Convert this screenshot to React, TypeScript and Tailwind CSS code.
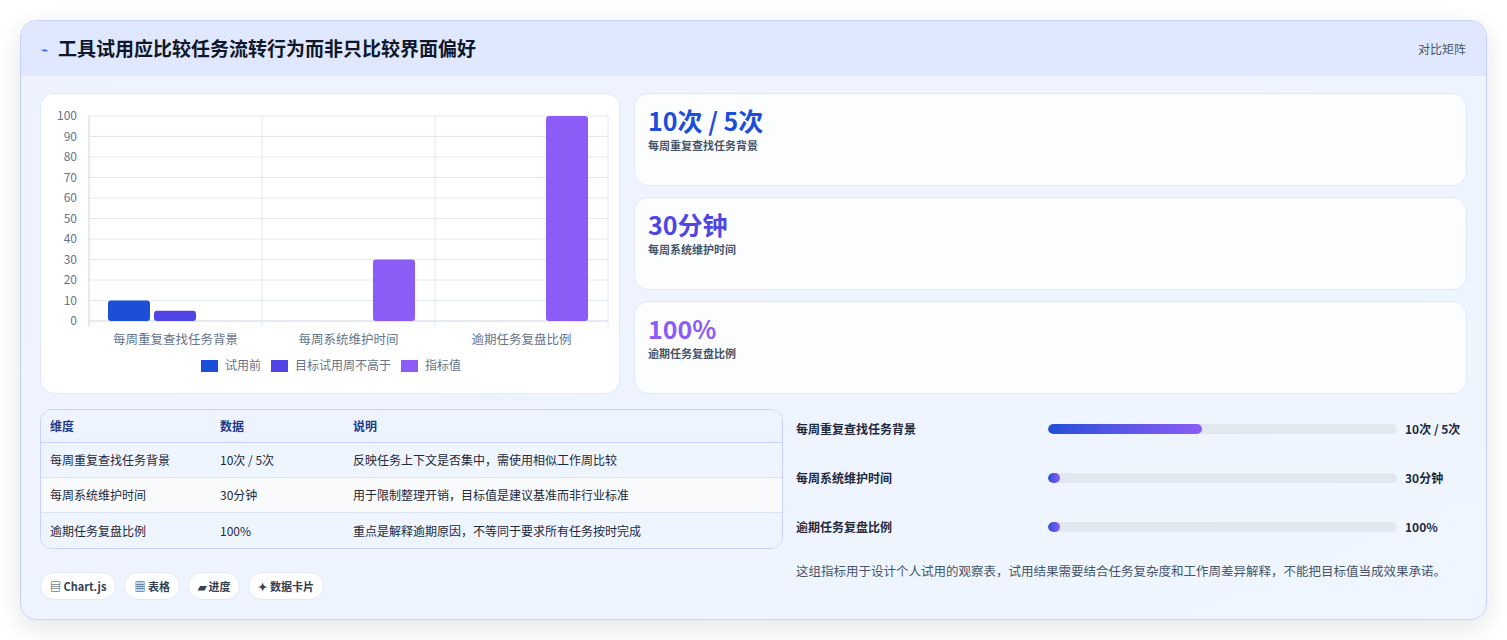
import React from "react";

const F = { fontFamily: '"Noto Sans CJK SC","Noto Sans",sans-serif' };

function Chart() {
  const L = 88, R = 607, T = 115, B = 320;
  const y = (v: number) => B - ((B - T) * v) / 100;
  const ticks = [0, 10, 20, 30, 40, 50, 60, 70, 80, 90, 100];
  const cw = (R - L) / 3;
  const bars = [
    { c: 0, i: 0, v: 10, col: "#1d4ed8" },
    { c: 0, i: 1, v: 5, col: "#4f46e5" },
    { c: 1, i: 2, v: 30, col: "#8b5cf6" },
    { c: 2, i: 2, v: 100, col: "#8b5cf6" },
  ];
  const cats = ["每周重复查找任务背景", "每周系统维护时间", "逾期任务复盘比例"];
  return (
    <svg width="580" height="301" viewBox="40 93 580 301" style={F}>
      {ticks.map((t) => (
        <g key={t}>
          <line x1={L} x2={R} y1={y(t)} y2={y(t)} stroke={t === 0 ? "#cbd5e1" : "#e2e8f0"} />
          <text x={76} y={y(t) + 4} textAnchor="end" fontSize="12" fill="#64748b">{t}</text>
        </g>
      ))}
      {[0, 1, 2, 3].map((k) => (
        <line key={k} x1={L + cw * k} x2={L + cw * k} y1={T} y2={B + 6} stroke={k === 0 ? "#cbd5e1" : "#e2e8f0"} />
      ))}
      {bars.map((b, k) => (
        <rect key={k} x={L + cw * b.c + 19 + b.i * 46} y={y(b.v)} width={42} height={B - y(b.v)} rx={3} fill={b.col} />
      ))}
      {cats.map((c, k) => (
        <text key={c} x={L + cw * k + cw / 2} y={343} textAnchor="middle" fontSize="12.5" fill="#64748b">{c}</text>
      ))}
      {[
        { x: 200, col: "#1d4ed8", t: "试用前" },
        { x: 270, col: "#4f46e5", t: "目标试用周不高于" },
        { x: 400, col: "#8b5cf6", t: "指标值" },
      ].map((l) => (
        <g key={l.t}>
          <rect x={l.x} y={359} width={17} height={12} fill={l.col} />
          <text x={l.x + 24} y={369} fontSize="12" fill="#64748b">{l.t}</text>
        </g>
      ))}
    </svg>
  );
}

const stats = [
  { v: "10次 / 5次", l: "每周重复查找任务背景", c: "text-[#1d4ed8]" },
  { v: "30分钟", l: "每周系统维护时间", c: "text-[#4f46e5]" },
  { v: "100%", l: "逾期任务复盘比例", c: "text-[#8b5cf6]" },
];

const rows = [
  ["每周重复查找任务背景", "10次 / 5次", "反映任务上下文是否集中，需使用相似工作周比较"],
  ["每周系统维护时间", "30分钟", "用于限制整理开销，目标值是建议基准而非行业标准"],
  ["逾期任务复盘比例", "100%", "重点是解释逾期原因，不等同于要求所有任务按时完成"],
];

const prog = [
  { l: "每周重复查找任务背景", v: "10次 / 5次", w: "w-[44%]" },
  { l: "每周系统维护时间", v: "30分钟", w: "w-[12px]" },
  { l: "逾期任务复盘比例", v: "100%", w: "w-[12px]" },
];

export default function App() {
  return (
    <div className="w-[1507px] h-[640px] bg-white pt-[20px] pl-[20px]" style={F}>
      <div className="w-[1467px] h-[600px] rounded-[16px] border border-[#c7d2fe] bg-gradient-to-br from-[#eef2ff] to-[#eff6ff] shadow-[0_8px_24px_rgba(30,41,59,0.12)] overflow-hidden">
        <div className="h-[55px] bg-[#dfe8fe] flex items-center justify-between pl-[20px] pr-[20px]">
          <div className="flex items-center gap-[10px]">
            <span className="text-[#2563eb] text-[12px]">⌁</span>
            <span className="text-[19px] font-bold text-[#0f172a]">工具试用应比较任务流转行为而非只比较界面偏好</span>
          </div>
          <span className="text-[12px] text-[#475569]">对比矩阵</span>
        </div>
        <div className="px-[19px] pt-[17px]">
          <div className="flex gap-[14px]">
            <div className="w-[580px] h-[301px] bg-white rounded-[14px] border border-[#e0e7ff] overflow-hidden">
              <Chart />
            </div>
            <div className="flex-1 flex flex-col gap-[11px]">
              {stats.map((s) => (
                <div key={s.l} className="h-[93px] bg-white/80 rounded-[14px] border border-[#e0e7ff] px-[13px] pt-[10px]">
                  <div className={`text-[25px] font-bold leading-[32px] ${s.c}`}>{s.v}</div>
                  <div className="text-[11px] font-semibold text-[#475569] mt-[1px]">{s.l}</div>
                </div>
              ))}
            </div>
          </div>
          <div className="flex gap-[13px] mt-[15px]">
            <div className="w-[743px]">
              <div className="rounded-[12px] border border-[#c7d2fe] overflow-hidden text-[12px]">
                <div className="flex h-[33px] items-center bg-[#eef4ff] border-b border-[#c7d2fe] font-semibold text-[#1e3a8a]">
                  <div className="w-[179px] pl-[9px]">维度</div>
                  <div className="w-[133px]">数据</div>
                  <div>说明</div>
                </div>
                {rows.map((r, i) => (
                  <div key={i} className={`flex h-[35px] items-center text-[#1e293b] ${i === 1 ? "bg-[#f8fafc]" : "bg-[#eff5ff]"} ${i < 2 ? "border-b border-[#dbe3f4]" : ""}`}>
                    <div className="w-[179px] pl-[9px]">{r[0]}</div>
                    <div className="w-[133px]">{r[1]}</div>
                    <div>{r[2]}</div>
                  </div>
                ))}
              </div>
              <div className="flex gap-[8px] mt-[23px] text-[11px] font-semibold text-[#334155]">
                {["▤ Chart.js", "▦ 表格", "▰ 进度", "✦ 数据卡片"].map((t) => (
                  <span key={t} className="h-[28px] px-[9px] flex items-center rounded-full bg-white border border-[#e2e8f0]">{t}</span>
                ))}
              </div>
            </div>
            <div className="flex-1 pt-[12px]">
              {prog.map((p, i) => (
                <div key={p.l} className={`flex items-center h-[16px] ${i > 0 ? "mt-[33px]" : ""}`}>
                  <div className="w-[252px] text-[12px] font-semibold text-[#1e293b]">{p.l}</div>
                  <div className="w-[349px] h-[10px] rounded-full bg-[#e2e8f0] overflow-hidden">
                    <div className={`h-full rounded-full bg-gradient-to-r from-[#1d4ed8] to-[#8b5cf6] ${p.w}`} />
                  </div>
                  <div className="ml-[8px] text-[12px] font-bold text-[#1e293b]">{p.v}</div>
                </div>
              ))}
              <p className="mt-[26px] text-[12.5px] leading-[20px] text-[#475569] pr-[16px]">
                这组指标用于设计个人试用的观察表，试用结果需要结合任务复杂度和工作周差异解释，不能把目标值当成效果承诺。
              </p>
            </div>
          </div>
        </div>
      </div>
    </div>
  );
}
